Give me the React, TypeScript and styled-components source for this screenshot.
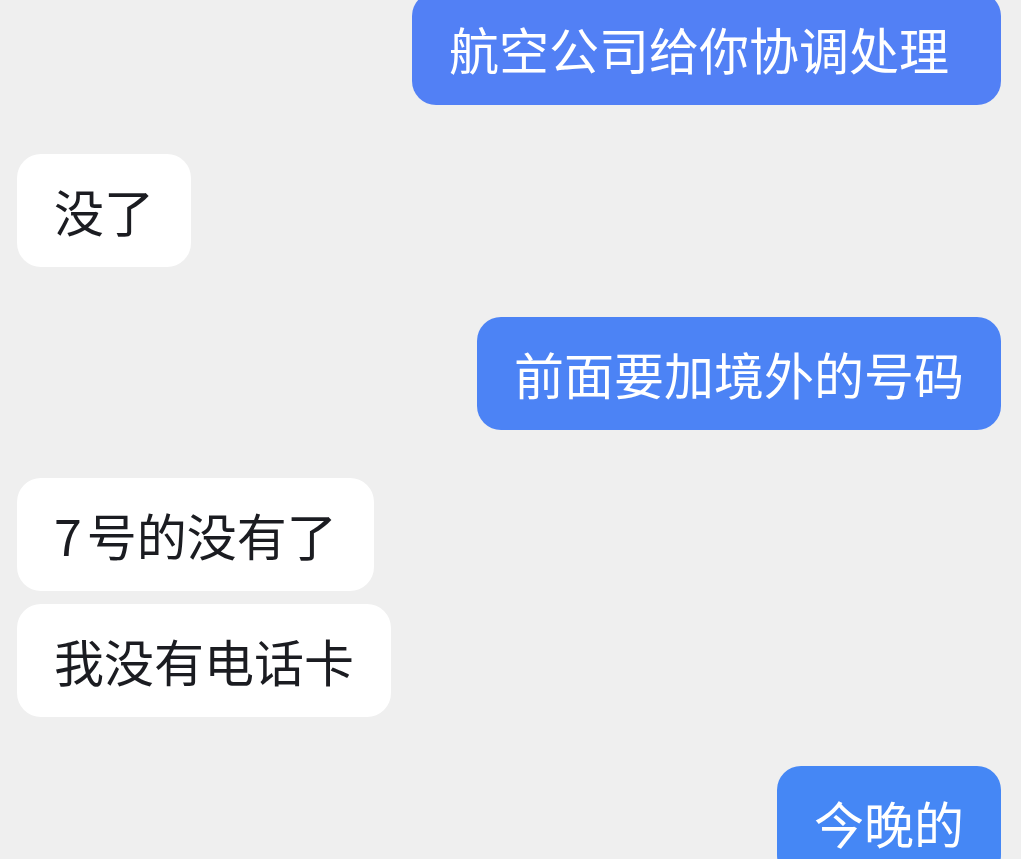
import styled, { createGlobalStyle } from "styled-components";

const GlobalStyle = createGlobalStyle`
  html, body {
    margin: 0;
    padding: 0;
    background-color: #efefef;
    overflow: hidden;
  }
  body {
    font-family: "Noto Sans CJK SC", "Noto Sans", sans-serif;
  }
`;

interface IRow {
  mine: boolean;
  gap: number;
}

interface IBubble {
  mine: boolean;
  tint: string;
  extraRight: number;
}

const Page = styled.div`
  width: 1021px;
  height: 859px;
  overflow: hidden;
  background-color: #efefef;
`;

const MessageList = styled.div`
  display: flex;
  flex-direction: column;
  margin-top: -8px;
  padding: 0 20px 0 17px;
`;

const Row = styled.div<IRow>`
  display: flex;
  justify-content: ${(props) => (props.mine ? "flex-end" : "flex-start")};
  margin-top: ${(props) => props.gap}px;
`;

const Bubble = styled.div<IBubble>`
  box-sizing: border-box;
  height: 113px;
  display: flex;
  align-items: center;
  padding: 0 ${(props) => 37 + props.extraRight}px 0 37px;
  border-radius: 24px;
  background-color: ${(props) => (props.mine ? props.tint : "#ffffff")};
  color: ${(props) => (props.mine ? "#ffffff" : "#1b1c21")};
  font-size: 50px;
  line-height: 65px;
  white-space: nowrap;
`;

// digits sit a little wider in the original font
const Digit = styled.span`
  margin-right: 5px;
`;

interface IMessage {
  text: string;
  mine: boolean;
  gap: number;
  tint?: string;
  extraRight?: number;
}

const messages: IMessage[] = [
  { text: "航空公司给你协调处理", mine: true, gap: 0, tint: "#5280f5", extraRight: 15 },
  { text: "没了", mine: false, gap: 49 },
  { text: "前面要加境外的号码", mine: true, gap: 50, tint: "#4c83f5" },
  { text: "7号的没有了", mine: false, gap: 48 },
  { text: "我没有电话卡", mine: false, gap: 13 },
  { text: "今晚的", mine: true, gap: 49, tint: "#4587f5" },
];

const renderText = (text: string) => {
  const match = text.match(/^(\d+)(.*)$/);
  if (!match) return text;
  return (
    <>
      <Digit>{match[1]}</Digit>
      {match[2]}
    </>
  );
};

const App = () => {
  return (
    <Page>
      <GlobalStyle />
      <MessageList>
        {messages.map((item, index) => (
          <Row key={index} mine={item.mine} gap={item.gap}>
            <Bubble mine={item.mine} tint={item.tint || "#4c83f5"} extraRight={item.extraRight || 0}>
              {renderText(item.text)}
            </Bubble>
          </Row>
        ))}
      </MessageList>
    </Page>
  );
};

export default App;
